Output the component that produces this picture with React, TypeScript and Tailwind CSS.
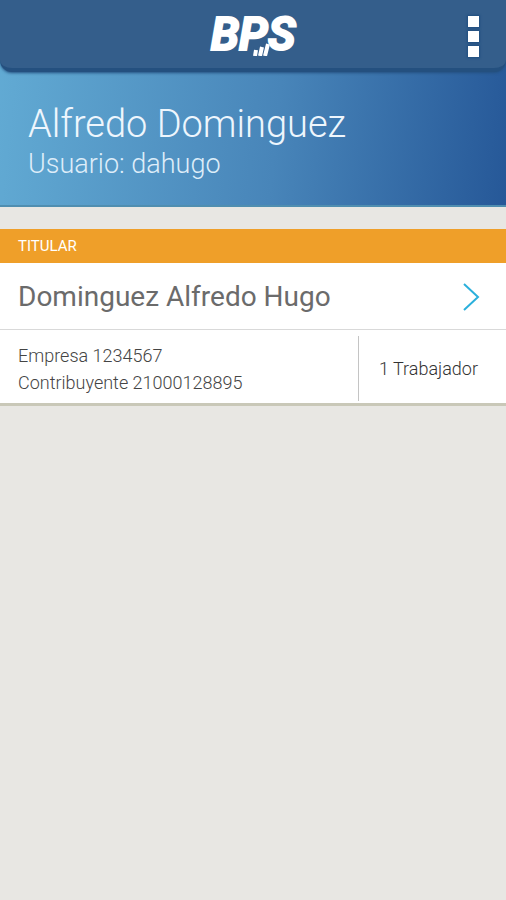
function Logo() {
  return (
    <div className="relative text-[46px] leading-10 font-bold text-white italic [-webkit-text-stroke:2px_white]">
      BPS
      <svg className="absolute top-[26px] left-10 h-4 w-6" viewBox="0 0 24 16" aria-hidden="true">
        <g stroke="#345e8b" strokeWidth="5">
          <path d="M4 15l1-7M9 15l2-9M14 15l2-11" />
        </g>
        <g stroke="#fff" strokeWidth="4">
          <path d="M4 16l1-6M9 16l2-9M14 16l3-12" />
        </g>
      </svg>
    </div>
  );
}

function TopBar() {
  return (
    <header className="grid h-[72px] grid-cols-[1fr_auto_1fr] items-center rounded-b-xl border-b-4 border-[#24507f] bg-[#345e8b] shadow-[0_1px_3px_#24507f]">
      <span />
      <Logo />
      <button
        type="button"
        aria-label="Menú"
        className="mt-1 mr-6 flex flex-col gap-1 justify-self-end py-1 pr-[3px] pl-1"
      >
        <span className="size-[11px] bg-white shadow-[0_0_2px_1px_#1f4e80]" />
        <span className="size-[11px] bg-white shadow-[0_0_2px_1px_#1f4e80]" />
        <span className="size-[11px] bg-white shadow-[0_0_2px_1px_#1f4e80]" />
      </button>
    </header>
  );
}

export default function App() {
  return (
    <div className="min-h-screen bg-[#e8e7e3] font-[Roboto,sans-serif]">
      <div className="border-b-2 border-[#4f8eb0] bg-linear-[96deg] from-[#62abd4] via-[#4885b9] via-55% to-[#265898]">
        <TopBar />
        <section className="px-7 pt-7 pb-[25px] font-light">
          <h1 className="text-[38px] leading-[48px] text-[#eef6fd]">Alfredo Dominguez</h1>
          <p className="text-[27px] leading-8 text-[#deedf9]">Usuario: dahugo</p>
        </section>
      </div>

      <main className="mt-[22px]">
        <article className="border-b-3 border-[#c9c8b8] bg-white">
          <h2 className="bg-[#ef9f29] px-[18px] py-1 text-[15px] leading-[26px] text-white">TITULAR</h2>
          <a
            href="#detalle"
            className="flex items-center justify-between border-b border-[#d9d9d9] pt-3.5 pr-[25px] pb-3 pl-[18px] text-[28px] leading-10 text-[#6b6b6b]"
          >
            Dominguez Alfredo Hugo
            <svg className="h-7 w-5" viewBox="0 0 20 28" fill="none" stroke="#2bb0dc" strokeWidth="2" aria-hidden="true">
              <path d="M3 1l14 13L3 27" />
            </svg>
          </a>
          <div className="flex items-stretch text-lg font-light">
            <div className="flex-1 pt-3 pb-[7px] pl-[18px] leading-[27px] text-[#444]">
              <p>Empresa 1234567</p>
              <p>Contribuyente 21000128895</p>
            </div>
            <div className="mt-1.5 mb-0.5 flex items-center border-l border-[#c4c4c4] pr-7 pl-5 text-[#333]">
              1 Trabajador
            </div>
          </div>
        </article>
      </main>
    </div>
  );
}
